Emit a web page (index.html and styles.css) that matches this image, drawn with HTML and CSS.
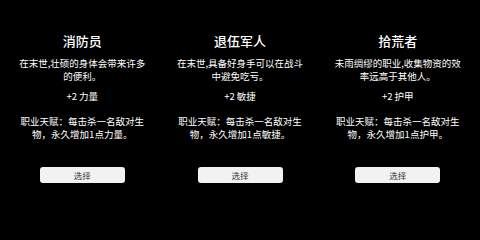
FILE: index.html
```html
<!DOCTYPE html>
<html lang="zh-CN">
<head>
<meta charset="utf-8">
<title>选择职业</title>
<link rel="stylesheet" href="styles.css">
</head>
<body>
<div class="cards">
  <div class="card">
    <div class="title">消防员</div>
    <div class="desc">在末世,壮硕的身体会带来许多的便利。</div>
    <div class="bonus">+2 力量</div>
    <div class="talent">职业天赋：每击杀一名敌对生物，永久增加1点力量。</div>
    <button class="pick">选择</button>
  </div>
  <div class="card">
    <div class="title">退伍军人</div>
    <div class="desc">在末世,具备好身手可以在战斗中避免吃亏。</div>
    <div class="bonus">+2 敏捷</div>
    <div class="talent">职业天赋：每击杀一名敌对生物，永久增加1点敏捷。</div>
    <button class="pick">选择</button>
  </div>
  <div class="card">
    <div class="title">拾荒者</div>
    <div class="desc">未雨绸缪的职业,收集物资的效率远高于其他人。</div>
    <div class="bonus">+2 护甲</div>
    <div class="talent">职业天赋：每击杀一名敌对生物，永久增加1点护甲。</div>
    <button class="pick">选择</button>
  </div>
</div>
</body>
</html>
```

FILE: styles.css
```css
html, body {
  margin: 0;
  padding: 0;
  background: #000;
}
body {
  width: 480px;
  height: 222px;
  overflow: hidden;
  color: #fff;
  font-family: "Noto Sans CJK SC", "Noto Sans", sans-serif;
}
.cards {
  display: flex;
  justify-content: center;
  padding-top: 32px;
}
.card {
  width: 157.75px;
  box-sizing: border-box;
  padding: 0 13px;
  display: flex;
  flex-direction: column;
  align-items: center;
  text-align: center;
}
.title {
  font-size: 13px;
  line-height: 18px;
  font-weight: 500;
}
.desc {
  margin-top: 6.5px;
  font-size: 9.5px;
  line-height: 13px;
}
.bonus {
  margin-top: 7px;
  font-size: 9.5px;
  line-height: 13px;
}
.talent {
  margin-top: 12px;
  font-size: 9.5px;
  line-height: 13.5px;
}
.pick {
  margin-top: 25px;
  width: 85px;
  height: 16px;
  padding: 0;
  border: none;
  border-radius: 3px;
  background: #f2f2f2;
  color: #333;
  font-family: "Noto Sans CJK SC", sans-serif;
  font-size: 8.5px;
  line-height: 16px;
}
```
